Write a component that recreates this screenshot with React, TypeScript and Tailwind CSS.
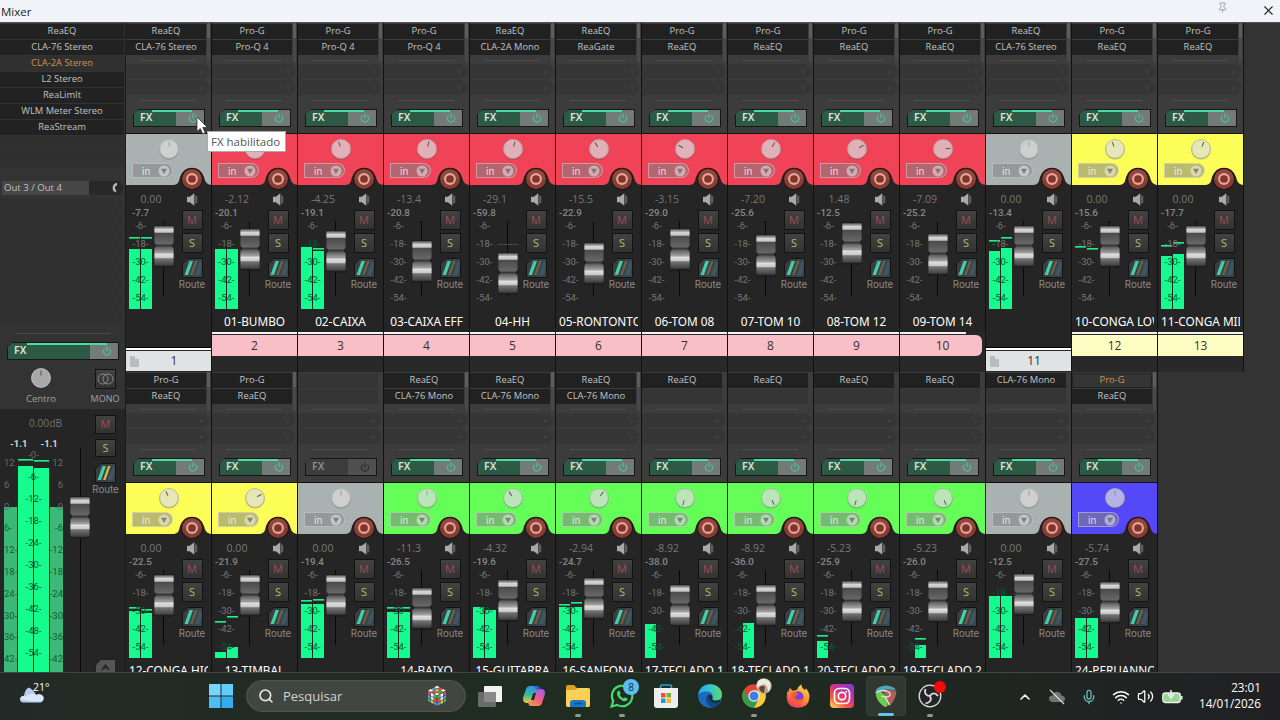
import { ChevronUp, Mic, Pin, Power, Search, Volume2, Wifi, X } from "lucide-react";
import type { ReactNode } from "react";

type Track = {
  fx: string[];
  color: string;
  pan: number;
  vol: string;
  peak: string;
  fader: number;
  // bar heights in px, left and right
  bars: [number, number];
  holds?: [number, number];
  name?: string;
  num: string;
  tint?: string;
  folder?: boolean;
  last?: boolean;
  bypassed?: boolean;
  offline?: boolean;
};

const GRAY = "#a9b1b1";
const RED = "#f04358";
const YELLOW = "#fdfd58";
const GREEN = "#65fd58";
const BLUE = "#5548f8";
const PINK = "#f9bfc6";
const CREAM = "#fdfdc4";
const FOLDER = "#e0e3e3";

const topRow: Track[] = [
  { fx: ["ReaEQ", "CLA-76 Stereo"], color: GRAY, pan: 0, vol: "0.00", peak: "-7.7", fader: 4, bars: [60, 60], holds: [71, 71], num: "1", folder: true },
  { fx: ["Pro-G", "Pro-Q 4"], color: RED, pan: 0, vol: "-2.12", peak: "-20.1", fader: 7, bars: [60, 60], name: "01-BUMBO", num: "2", tint: PINK },
  { fx: ["Pro-G", "Pro-Q 4"], color: RED, pan: -18, vol: "-4.25", peak: "-19.1", fader: 9, bars: [62, 58], holds: [0, 60], name: "02-CAIXA", num: "3", tint: PINK },
  { fx: ["Pro-G", "Pro-Q 4"], color: RED, pan: 15, vol: "-13.4", peak: "-20.8", fader: 19, bars: [0, 0], name: "03-CAIXA EFF", num: "4", tint: PINK },
  { fx: ["ReaEQ", "CLA-2A Mono"], color: RED, pan: 15, vol: "-29.1", peak: "-59.8", fader: 31, bars: [0, 0], name: "04-HH", num: "5", tint: PINK },
  { fx: ["ReaEQ", "ReaGate"], color: RED, pan: -32, vol: "-15.5", peak: "-22.9", fader: 21, bars: [0, 0], name: "05-RONTONTO", num: "6", tint: PINK },
  { fx: ["Pro-G", "ReaEQ"], color: RED, pan: -60, vol: "-3.15", peak: "-29.0", fader: 7, bars: [0, 0], name: "06-TOM 08", num: "7", tint: PINK },
  { fx: ["Pro-G", "ReaEQ"], color: RED, pan: 30, vol: "-7.20", peak: "-25.6", fader: 13, bars: [0, 0], name: "07-TOM 10", num: "8", tint: PINK },
  { fx: ["Pro-G", "ReaEQ"], color: RED, pan: 60, vol: "1.48", peak: "-12.5", fader: 1, bars: [0, 0], name: "08-TOM 12", num: "9", tint: PINK },
  { fx: ["Pro-G", "ReaEQ"], color: RED, pan: 85, vol: "-7.09", peak: "-25.2", fader: 12, bars: [0, 0], name: "09-TOM 14", num: "10", tint: PINK, last: true },
  { fx: ["ReaEQ", "CLA-76 Stereo"], color: GRAY, pan: 0, vol: "0.00", peak: "-13.4", fader: 4, bars: [58, 61], holds: [68, 71], num: "11", folder: true },
  { fx: ["Pro-G", "ReaEQ"], color: YELLOW, pan: -22, vol: "0.00", peak: "-15.6", fader: 4, bars: [0, 0], holds: [62, 60], name: "10-CONGA LOW", num: "12", tint: CREAM },
  { fx: ["Pro-G", "ReaEQ"], color: YELLOW, pan: 22, vol: "0.00", peak: "-17.7", fader: 4, bars: [53, 55], holds: [63, 66], name: "11-CONGA MID", num: "13", tint: CREAM },
];

const bottomRow: Track[] = [
  { fx: ["Pro-G", "ReaEQ"], color: YELLOW, pan: -25, vol: "0.00", peak: "-22.5", fader: 4, bars: [47, 45], holds: [50, 48], name: "12-CONGA HIG", num: "14", tint: CREAM },
  { fx: ["Pro-G", "ReaEQ"], color: YELLOW, pan: 60, vol: "0.00", peak: "-21.9", fader: 4, bars: [6, 11], holds: [36, 41], name: "13-TIMBAL", num: "15", tint: CREAM },
  { fx: [], color: GRAY, pan: 0, vol: "0.00", peak: "-19.4", fader: 4, bars: [54, 54], holds: [57, 58], num: "16", bypassed: true },
  { fx: ["ReaEQ", "CLA-76 Mono"], color: GREEN, pan: 0, vol: "-11.3", peak: "-26.5", fader: 17, bars: [46, 46], holds: [50, 50], name: "14-BAIXO", num: "17" },
  { fx: ["ReaEQ", "CLA-76 Mono"], color: GREEN, pan: -32, vol: "-4.32", peak: "-19.6", fader: 9, bars: [51, 48], name: "15-GUITARRA", num: "18" },
  { fx: ["ReaEQ", "CLA-76 Mono"], color: GREEN, pan: 35, vol: "-2.94", peak: "-24.7", fader: 7, bars: [51, 51], holds: [53, 55], name: "16-SANFONA", num: "19" },
  { fx: ["ReaEQ"], color: GREEN, pan: 198, vol: "-8.92", peak: "-38.0", fader: 14, bars: [34, 0], name: "17-TECLADO 1", num: "20" },
  { fx: ["ReaEQ"], color: GREEN, pan: 155, vol: "-8.92", peak: "-36.0", fader: 14, bars: [0, 35], name: "18-TECLADO 1", num: "21" },
  { fx: ["ReaEQ"], color: GREEN, pan: 198, vol: "-5.23", peak: "-25.9", fader: 10, bars: [17, 0], holds: [22, 0], name: "20-TECLADO 2", num: "22" },
  { fx: ["ReaEQ"], color: GREEN, pan: 155, vol: "-5.23", peak: "-26.0", fader: 10, bars: [0, 13], holds: [0, 19], name: "19-TECLADO 2", num: "23" },
  { fx: ["CLA-76 Mono"], color: GRAY, pan: 0, vol: "0.00", peak: "-12.5", fader: 3, bars: [62, 62], num: "24", folder: true },
  { fx: ["Pro-G", "ReaEQ"], color: BLUE, pan: 0, vol: "-5.74", peak: "-27.5", fader: 11, bars: [40, 40], name: "24-PERUANNO", num: "25", offline: true },
];

function FxButton({ wide, off }: { wide?: boolean; off?: boolean }) {
  return (
    <div
      className={`relative h-[18px] flex border border-[#161616] bg-[#161616] [clip-path:polygon(6px_0,100%_0,100%_100%,0_100%,0_6px)] ${wide ? "w-[112px]" : "w-[72px]"}`}
    >
      <div className={`flex-1 flex items-center pl-[6px] text-[10.5px] font-semibold font-['Noto_Sans',sans-serif] ${off ? "bg-[#3d3d3d] text-[#8b8b8b]" : "bg-[#2c5a45] text-[#d5e5dc]"}`}>FX</div>
      <div className={`w-[28px] flex items-center justify-center pl-1.5 ${off ? "bg-[#505050] text-[#222]" : "bg-[#727b77] text-[#45d2a2]"}`}>
        <Power className="w-[10px] h-[10px]" strokeWidth={2.4} />
      </div>
      {!off && <div className={`absolute top-0 h-[2px] bg-[#49dca5] ${wide ? "left-[19px] w-[80px]" : "left-[18px] w-[40px]"}`} />}
    </div>
  );
}

function Knob({ pan, master }: { pan: number; master?: boolean }) {
  return (
    <svg width="22" height="22" viewBox="0 0 22 22" className="block">
      <circle cx="11" cy="11.8" r="9.8" fill="#000" opacity="0.25" />
      <circle cx="11" cy="11" r="9.8" fill={master ? "#a9a9a9" : "#fff"} opacity={master ? 1 : 0.62} />
      <circle cx="11" cy="11" r="9.4" fill="none" stroke={master ? "#c4c4c4" : "#9aa09a"} strokeWidth="0.9" opacity="0.8" />
      <line x1="11" y1="8.5" x2="11" y2="3.5" stroke="#333" strokeWidth="1" opacity={pan || master ? 0.75 : 0.3} transform={`rotate(${pan} 11 11)`} />
    </svg>
  );
}

function FaderCap() {
  return (
    <svg width="20" height="43" viewBox="0 0 20 43" className="block">
      <defs>
        <linearGradient id="cap" x1="0" y1="0" x2="0" y2="1">
          <stop offset="0" stopColor="#777" />
          <stop offset="0.05" stopColor="#8c8c8c" />
          <stop offset="0.08" stopColor="#d6d6d6" />
          <stop offset="0.15" stopColor="#c6c6c6" />
          <stop offset="0.18" stopColor="#4c4c4c" />
          <stop offset="0.43" stopColor="#666" />
          <stop offset="0.48" stopColor="#333" />
          <stop offset="0.52" stopColor="#606060" />
          <stop offset="0.65" stopColor="#a0a0a0" />
          <stop offset="0.69" stopColor="#e0e0e0" />
          <stop offset="0.77" stopColor="#c8c8c8" />
          <stop offset="0.8" stopColor="#737373" />
          <stop offset="0.94" stopColor="#484848" />
          <stop offset="1" stopColor="#1c1c1c" />
        </linearGradient>
      </defs>
      <path d="M0 1 H20 V17.500 L18 20.500 L20 23.500 V42 H0 V23.500 L2 20.500 L0 17.500 Z" fill="url(#cap)" stroke="#161616" strokeWidth="0.7" />
    </svg>
  );
}

function SquareButton({ children, className }: { children: ReactNode; className: string }) {
  return (
    <div className={`w-[21px] h-[20px] flex items-center justify-center border border-[#131313] bg-linear-to-b from-[#424242] to-[#333] text-[11px] font-["Open_Sans",sans-serif] ${className}`}>
      {children}
    </div>
  );
}

function RouteIcon({ master }: { master?: boolean }) {
  return (
    <svg width="21" height="20" viewBox="0 0 21 20" className="block">
      <path d="M6 0.5 H20.5 V19.5 H0.5 V6 Z" fill="#3a3e40" stroke="#141414" />
      <path d="M14 1 H20 V19 H10 Z" fill="#37464d" />
      <path d="M2.500 17 L7.500 3 H11 L6 17 Z" fill="#42ceaa" />
      <path d="M8 17 L13 3 H15.500 L10.500 17 Z" fill={master ? "#d9b541" : "#6c6145"} />
      <path d="M13 17 L17.500 4 H19.500 V10 L17 17 Z" fill="#425661" />
    </svg>
  );
}

function RecordButton() {
  return (
    <svg width="24" height="24" viewBox="0 0 24 24" className="block">
      <circle cx="12" cy="12" r="11.3" fill="#241917" />
      <circle cx="12" cy="12" r="10" fill="#873d34" />
      <path d="M2.500 12 A9.500 9.500 0 0 1 21.500 12 Z" fill="#9b4c42" opacity="0.6" />
      <circle cx="12" cy="12" r="4.900" fill="#83332c" stroke="#e0a899" strokeWidth="2.100" />
    </svg>
  );
}

function Speaker() {
  return (
    <svg width="13" height="13" viewBox="0 0 13 13" className="block">
      <path d="M1 3.800 H3.800 L8.300 0.300 V12.700 L3.800 9.200 H1 Z" fill="#a9a9a9" />
      <path d="M8.900 2 L11.300 3.300 V9.700 L8.900 11 Z" fill="#5d5d5d" />
    </svg>
  );
}

function Header({ track }: { track: Track }) {
  return (
    <div className="relative h-[51px] w-[85px]">
      <svg width="85" height="51" className="absolute inset-0">
        <rect width="85" height="51" fill={track.color} />
        <path d="M48 51 C53 50 53 47 54 43 A12.500 12.500 0 0 1 78 43 C79 47 80 50 85 51 Z" fill="#252525" />
      </svg>
      <div className="relative pt-[4px] pl-[32px]">
        <Knob pan={track.pan} />
      </div>
      <div className="relative flex mt-[3px] pl-[6px]">
        <div className="w-[41px] h-[15px] flex items-center justify-between pl-[9px] pr-[2px] rounded-r-full border border-white/35 bg-[#848484]/55 text-[10px] leading-none text-white/75 font-['Inter',sans-serif]">
          in
          <svg width="12" height="12" viewBox="0 0 12 12">
            <circle cx="6" cy="6" r="5.500" fill="#fff" opacity="0.45" />
            <path d="M3 3.800 H9 L6 8.900 Z" fill="#666" opacity="0.75" />
          </svg>
        </div>
        <div className="ml-[7px] mt-[4px] -mb-[10px]">
          <RecordButton />
        </div>
      </div>
    </div>
  );
}

function Bar({ height, hold }: { height: number; hold: number }) {
  return (
    <div className="relative flex-1 flex items-end">
      <div className="w-full bg-[#15fb8e]" style={{ height }} />
      {hold > 0 && <div className="absolute inset-x-0 h-[2px] border-b border-[#12ad65] bg-[#20ee8a]" style={{ bottom: hold - 1 }} />}
    </div>
  );
}

function Meter({ track }: { track: Track }) {
  const holds = track.holds ?? [0, 0];
  return (
    <div className="relative w-[23px] h-[88px] flex gap-px">
      <Bar height={track.bars[0]} hold={holds[0]} />
      <Bar height={track.bars[1]} hold={holds[1]} />
      <div className="absolute -left-1 -right-1 top-[-4px] flex flex-col text-center text-[9.5px] leading-[18px] font-['Roboto',sans-serif]">
        {[6, 18, 30, 42, 54].map((db, i) => {
          const lit = Math.max(...track.bars) > 79 - i * 18;
          return (
            <span key={db} className={lit ? "text-[#075c32]" : "text-[#777]"}>
              -{db}-
            </span>
          );
        })}
      </div>
    </div>
  );
}

function Slots({ track }: { track: Track }) {
  return (
    <div className="h-[37px] flex">
      <div className="w-[80px] mr-px flex flex-col pt-px gap-px">
        {[0, 1].map((i) => {
          const label = track.fx[i];
          const dim = track.offline && i === 0;
          return (
            <div
              key={i}
              className={`h-[15px] text-center text-[9.4px] ${label ? (dim ? "bg-[#353535] border border-[#242424] leading-[12px] text-[#cf9254]" : "bg-[#212121] leading-[14px] text-[#c3c3c3]") : "bg-[#353535]"}`}
            >
              {label}
            </div>
          );
        })}
      </div>
      {track.fx.length > 1 && (
        <div className="w-[3px] h-[39px] bg-[#484848]">
          <div className="h-[15px] bg-[#5c5c5c]" />
        </div>
      )}
    </div>
  );
}

function Strip({ track }: { track: Track }) {
  return (
    <div className="w-[86px] h-[349px] shrink-0 border-r border-[#111] bg-[#292929] flex flex-col">
      <div className="h-[111px] bg-[#3c3c3c] border-b border-[#111]">
        <Slots track={track} />
        <div className="ml-[14px] w-[56px] h-px bg-[#4b4b4b]" />
        {[0, 1].map((i) => (
          <div key={i} className={`w-[83px] h-[15px] rounded-r-full bg-[#363636] flex justify-end items-center pr-[6px] ${i ? "mt-px" : "mt-[3px]"}`}>
            <span className="w-[3px] h-[2px] bg-[#414141]" />
          </div>
        ))}
        <div className="ml-[14px] mt-[5px] w-[56px] h-px bg-[#4e4e4e]" />
        <div className="mt-[8px] ml-[7px]">
          <FxButton off={track.bypassed} />
        </div>
      </div>
      <Header track={track} />
      <div className="h-[127px] shrink-0 flex bg-[#252525]">
        <div className="w-[54px] pt-[8px]">
          <div className="h-[13px] w-[50px] text-center text-[10.500px] leading-[12px] text-[#777]">{track.vol}</div>
          <div className="h-[13px] w-[29px] text-center text-[9.800px] leading-[13px] font-medium text-[#888] font-['Roboto',sans-serif]">{track.peak}</div>
          <div className="flex pt-[2px]">
            <div className="ml-[3px]">
              <Meter track={track} />
            </div>
            <div className="relative ml-[2px] w-[20px] h-[75px] bg-[linear-gradient(#070707,#070707)] bg-size-[1px_75px] bg-position-[9px_0] bg-no-repeat">
              <div className="absolute left-0 top-[23px] w-full h-px bg-[#484848]" />
              <div className="relative" style={{ paddingTop: track.fader }}>
                <FaderCap />
              </div>
            </div>
          </div>
        </div>
        <div className="w-[24px] flex flex-col items-center pt-[8px]">
          <Speaker />
          <SquareButton className="mt-[4px] text-[#a14b50]">M</SquareButton>
          <SquareButton className="mt-[3px] text-[#b3ba63]">S</SquareButton>
          <div className="mt-[5px]">
            <RouteIcon />
          </div>
          <div className="mt-px text-[9.700px] leading-[12px] text-[#8a8a8a] font-['Inter',sans-serif]">Route</div>
        </div>
      </div>
      <div className={`bg-[#252525] shrink-0 ${track.folder ? "h-[35px]" : "h-[20px]"}`}>
        <div className="ml-[3px] w-[79px] overflow-hidden whitespace-nowrap text-center text-[11.800px] leading-[18px] text-white font-['Noto_Sans',sans-serif]">{track.name}</div>
      </div>
      {track.folder ? (
        <div className="shrink-0 border-t border-black">
          <div className="h-[2px] bg-white" />
          <div className="mt-px h-[20px] flex items-center text-[12px] text-[#333]" style={{ backgroundColor: FOLDER }}>
            <svg width="10" height="11" viewBox="0 0 10 11" className="ml-[4px]">
              <path d="M0 0 H5 V3 H9 V11 H0 Z" fill="#b7bcbc" />
            </svg>
            <span className="w-[68px] text-center">{track.num}</span>
          </div>
        </div>
      ) : (
        <div className="shrink-0">
          <div className={`h-[2px] bg-[#f4f4f4] ${track.last ? "w-[66px]" : ""}`} />
          <div
            className={`mt-px h-[21px] text-center text-[12px] leading-[21px] text-[#333] ${track.last ? "w-[82px] rounded-r-[6px] pl-[3px]" : ""}`}
            style={{ backgroundColor: track.tint ?? "#c9fdc4" }}
          >
            {track.num}
          </div>
        </div>
      )}
    </div>
  );
}

function SideMeter({ right }: { right?: boolean }) {
  const marks = ["12", "6", "0", "6", "12", "18", "24", "30", "36", "42"];
  return (
    <div className="relative w-[13px] flex flex-col justify-end">
      <div className="h-[165px] bg-[#3cb978]" />
      <div className={`absolute top-[1px] flex flex-col text-[9.500px] leading-[21.800px] font-['Roboto',sans-serif] ${right ? "right-0 text-right" : "left-0 text-left"}`}>
        {marks.map((m, i) => (
          <span key={i} className={i > 2 ? "text-[#155c36]" : "text-[#6b6b6b]"}>
            {i < 2 ? m : right ? `-${m}` : `${m}-`}
          </span>
        ))}
      </div>
    </div>
  );
}

function Master() {
  const fx = ["ReaEQ", "CLA-76 Stereo", "CLA-2A Stereo", "L2 Stereo", "ReaLimIt", "WLM Meter Stereo", "ReaStream"];
  return (
    <div className="w-[126px] h-full shrink-0 border-r border-[#1a1a1a] bg-[#333] flex flex-col">
      <div className="h-[158px] pt-px pr-px flex flex-col gap-px">
        {fx.map((name) => (
          <div
            key={name}
            className={`h-[15px] text-center text-[9.400px] leading-[14px] ${name === "CLA-2A Stereo" ? "bg-[#303030] text-[#cf9254]" : "bg-[#222] text-[#c3c3c3]"}`}
          >
            {name}
          </div>
        ))}
        <div className="h-[15px] bg-[#2f2f2f]" />
        <div className="h-[15px] bg-[#2f2f2f]" />
      </div>
      <div className="h-[14px] ml-[2px] mr-[2px] flex bg-[#282828] rounded-r-full">
        <div className="w-[87px] bg-[#464646] pl-[2px] text-[9.600px] leading-[13px] text-[#c0c0c0]">Out 3 / Out 4</div>
        <svg width="34" height="14" viewBox="0 0 34 14">
          <path d="M28 3 A4 4 0 0 0 27 10.500" fill="none" stroke="#b5b5b5" strokeWidth="2.300" />
        </svg>
      </div>
      <div className="h-[138px] pt-[3px] pr-[3px] flex flex-col gap-px">
        {[0, 1, 2, 3, 4, 5, 6, 7].map((i) => (
          <div key={i} className="h-[15px] rounded-r-full bg-[#303030] flex items-center justify-end pr-[6px]">
            <span className="w-[2px] h-[2px] bg-[#3e3e3e]" />
          </div>
        ))}
      </div>
      <div className="ml-[16px] w-[95px] h-px bg-[#4a4a4a]" />
      <div className="pt-[8px] pl-[7px]">
        <FxButton wide />
      </div>
      <div className="h-[49px] flex pt-[7px] text-[9.500px] text-[#a2a2a2]">
        <div className="w-[82px] shrink-0 flex flex-col items-center">
          <Knob pan={0} master />
          <span className="mt-[4px] leading-[12px]">Centro</span>
        </div>
        <div className="w-[46px] shrink-0 flex flex-col items-center pt-[2px]">
          <SquareButton className="">
            <svg width="17" height="12" viewBox="0 0 17 12" fill="none" stroke="#888">
              <circle cx="6" cy="6" r="5" />
              <circle cx="11" cy="6" r="5" />
            </svg>
          </SquareButton>
          <span className="mt-[4px] text-[9px] leading-[12px]">MONO</span>
        </div>
      </div>
      <div className="flex-1 flex bg-[#252525] overflow-hidden">
        <div className="w-[67px] flex flex-col">
          <div className="pt-[7px] pl-[29px] h-[28px] whitespace-nowrap text-[10.200px] leading-[14px] text-[#727272]">0.00dB</div>
          <div className="flex gap-[13px] pl-[10px] text-[9.500px] leading-[14px] font-bold text-[#d4d4d4] font-['Roboto',sans-serif]">
            <span>-1.1</span>
            <span>-1.1</span>
          </div>
          <div className="pl-[4px] flex gap-px h-[221px]">
            <SideMeter />
            <div className="relative w-[31px] flex gap-px">
              <Bar height={206} hold={212} />
              <Bar height={204} hold={211} />
              <div className="absolute inset-x-0 top-[-7px] flex flex-col text-center text-[9.500px] leading-[21.950px] font-['Roboto',sans-serif]">
                {[0, 6, 12, 18, 24, 30, 36, 42, 48, 54].map((db) => (
                  <span key={db} className={db ? "text-[#075c32]" : "text-[#6b6b6b]"}>
                    -{db}-
                  </span>
                ))}
              </div>
            </div>
            <SideMeter right />
          </div>
        </div>
        <div className="ml-[3px] mt-[39px] w-[20px] h-[224px] bg-[linear-gradient(#070707,#070707)] bg-size-[1px_224px] bg-position-[10px_0] bg-no-repeat pt-[48px]">
          <FaderCap />
        </div>
        <div className="w-[31px] shrink-0 flex flex-col items-center pt-[6px]">
          <SquareButton className="text-[#a14b50]">M</SquareButton>
          <SquareButton className="mt-[5px] text-[#b3ba63]">S</SquareButton>
          <div className="mt-[6px]">
            <RouteIcon master />
          </div>
          <span className="mt-px text-[9.700px] leading-[12px] text-[#8a8a8a] font-['Inter',sans-serif]">Route</span>
          <svg width="21" height="20" viewBox="0 0 21 20" className="mt-[163px] shrink-0">
            <path d="M6 0.500 H20.500 V19.500 H0.500 V6 Z" fill="#555" stroke="#222" />
            <path d="M7 11 L10.500 6 L14 11 M8 9 H13" fill="none" stroke="#252525" strokeWidth="1.500" />
          </svg>
        </div>
      </div>
    </div>
  );
}

function Cube() {
  const c = ["#e7514b", "#f4f4f4", "#41b65c", "#f6b63e", "#4b9be9", "#e7e7e7"];
  const cells = [0, 1, 2, 3, 4, 5, 6, 7, 8];
  return (
    <svg width="20" height="22" viewBox="0 0 20 22">
      <path d="M10 0.500 L19.500 5.500 V16 L10 21.500 L0.500 16 V5.500 Z" fill="#333" />
      {cells.map((i) => {
        const u = i % 3;
        const v = Math.floor(i / 3);
        return (
          <g key={i}>
            <path transform={`translate(${10 + (u - v) * 3.1} ${0.8 + (u + v) * 1.65})`} d="M0 0 L2.800 1.500 L0 3 L-2.800 1.500 Z" fill={c[(i * 5 + 1) % 6]} />
            <path transform={`translate(${0.8 + u * 3.1} ${6 + u * 1.65 + v * 3.5})`} d="M0 0 L2.700 1.400 V4.400 L0 3 Z" fill={c[(i * 7 + v) % 6]} />
            <path transform={`translate(${10.3 + u * 3.1} ${11 - u * 1.65 + v * 3.5})`} d="M0 0 L2.700 -1.400 V1.600 L0 3 Z" fill={c[(i * 5 + v + 2) % 6]} />
          </g>
        );
      })}
    </svg>
  );
}

function TaskIcon({ children, dot, active }: { children: ReactNode; dot?: boolean; active?: boolean }) {
  return (
    <div className="w-[44px] h-full flex justify-center">
      <div className={`relative w-[40px] h-[40px] mt-[3px] rounded-[4px] flex items-center justify-center ${active ? "bg-[#2f392f] border border-[#374137]" : ""}`}>
        {children}
        {dot && <div className="absolute bottom-[-1px] w-[6px] h-[3px] rounded-full bg-[#909790]" />}
        {active && <div className="absolute bottom-[-1px] w-[16px] h-[3px] rounded-full bg-[#62c4f0]" />}
      </div>
    </div>
  );
}

function TaskIcons() {
  return (
    <div className="flex h-full">
      <TaskIcon>
        <svg width="24" height="24" viewBox="0 0 24 24">
          <rect x="6" y="2" width="18" height="16" rx="1" fill="#f2f2f2" />
          <rect x="0" y="8" width="18" height="15" rx="1" fill="#777" opacity="0.85" />
        </svg>
      </TaskIcon>
      <TaskIcon>
        <svg width="24" height="24" viewBox="0 0 24 24">
          <defs>
            <linearGradient id="cpA" x1="0.500" y1="0" x2="0.400" y2="1">
              <stop offset="0" stopColor="#2b95ea" />
              <stop offset="0.500" stopColor="#35b6a0" />
              <stop offset="1" stopColor="#e6c93c" />
            </linearGradient>
            <linearGradient id="cpB" x1="0.700" y1="0" x2="0.300" y2="1">
              <stop offset="0" stopColor="#a75bea" />
              <stop offset="0.500" stopColor="#ee5a8e" />
              <stop offset="1" stopColor="#f88e4c" />
            </linearGradient>
          </defs>
          <path d="M8 2 H15 Q17 2 17.500 4 L18 6 H16 Q14 6 13.300 8 L10.500 17 Q10 19 8 19 H4 Q0 18 1.300 13 L4 5 Q5 2 8 2 Z" fill="url(#cpA)" />
          <path d="M16 22 H9 Q7 22 6.500 20 L6 18 H8 Q10 18 10.700 16 L13.500 7 Q14 5 16 5 H20 Q24 6 22.700 11 L20 19 Q19 22 16 22 Z" fill="url(#cpB)" />
          <path d="M13.800 5.500 H17.800 L16.500 2.500 Q16 2 14 2 H12 Q14 3 13.800 5.500 Z" fill="#255fd2" />
          <path d="M11.300 9 L14 9 L12 16 H9 Z" fill="#1d2b20" />
        </svg>
      </TaskIcon>
      <TaskIcon dot>
        <svg width="24" height="24" viewBox="0 0 24 24">
          <path d="M0 3 Q0 1 2 1 H8 L11 4 H22 Q24 4 24 6 V21 Q24 23 22 23 H2 Q0 23 0 21 Z" fill="#dd9e25" />
          <path d="M0 6 H9 L12 4 H22 Q24 4 24 6 V21 Q24 23 22 23 H2 Q0 23 0 21 Z" fill="#fad157" />
          <path d="M4 23 V19 Q4 16 7 16 H17 Q20 16 20 19 V23 Z" fill="#1979c9" />
          <path d="M8 19.500 H16" stroke="#0a4d8a" strokeWidth="1.500" />
        </svg>
      </TaskIcon>
      <TaskIcon dot>
        <svg width="24" height="24" viewBox="0 0 24 24" fill="none">
          <path d="M1.500 22.500 L3.200 16.900 A10.200 10.200 0 1 1 7.200 20.900 Z" stroke="#45da6c" strokeWidth="2.200" />
          <path d="M7.500 7.500 Q9 5.500 9.800 7.500 L10.700 9.600 L9.700 11 Q11 13.600 13.700 14.600 L15 13.200 L17.500 14.400 Q18 16.500 15 17.200 Q12.500 17.300 9.500 14.400 Q6 10.900 7.500 7.500 Z" fill="#45da6c" />
        </svg>
        <div className="absolute top-[3px] right-[3px] w-[16px] h-[16px] rounded-full bg-[#5bbdf0] text-center text-[10px] leading-[16px] text-[#16303e]">8</div>
      </TaskIcon>
      <TaskIcon>
        <svg width="24" height="24" viewBox="0 0 24 24">
          <path d="M6.500 5 V2.500 Q6.500 1 8 1 H16 Q17.500 1 17.500 2.500 V5" fill="none" stroke="#299fda" strokeWidth="1.700" />
          <path d="M0 4 H24 V21 Q24 24 21 24 H3 Q0 24 0 21 Z" fill="#eee" />
          <path d="M7 9 H11.500 V13.500 H7 Z" fill="#e9532b" />
          <path d="M12.500 9 H17 V13.500 H12.500 Z" fill="#76b62e" />
          <path d="M7 14.500 H11.500 V19 H7 Z" fill="#2197da" />
          <path d="M12.500 14.500 H17 V19 H12.500 Z" fill="#f3b52b" />
        </svg>
      </TaskIcon>
      <TaskIcon>
        <svg width="24" height="24" viewBox="0 0 24 24">
          <defs>
            <linearGradient id="edge" x1="0" y1="0.300" x2="1" y2="0.300">
              <stop offset="0" stopColor="#2ba6e3" />
              <stop offset="0.500" stopColor="#34c3cf" />
              <stop offset="1" stopColor="#5edb62" />
            </linearGradient>
          </defs>
          <circle cx="12" cy="12" r="11.800" fill="#1a6dbe" />
          <path d="M0.200 11 C1 4 6 0.200 12 0.200 C19 0.200 24 5 24 10.500 C24 14.500 21 16.500 18 16.500 C15 16.500 13.500 15.500 14.500 14 C16 11 13 7.500 9 7.500 C4.500 7.500 1 9 0.200 11 Z" fill="url(#edge)" />
          <path d="M9.500 11 C6 15 9 22 14 23.500 C18.500 23 21.500 20 22.500 18 C17 20.500 11 18 9.500 11 Z" fill="#12488e" />
          <path d="M10 11.500 C11.500 9.500 14.700 11 14.500 14 C13.500 15.500 15 16.500 17.500 16.700 L21.500 16 Q22.500 16 22.200 17.500 C17 21.500 10.500 17.500 10 11.500 Z" fill="#1f2c21" />
        </svg>
      </TaskIcon>
      <TaskIcon dot>
        <svg width="24" height="24" viewBox="0 0 24 24">
          <circle cx="12" cy="12" r="11.800" fill="#df4437" />
          <path d="M12 6.600 H22.500 A11.800 11.800 0 0 1 12 23.800 L16.500 15 Z" fill="#f8cc38" />
          <path d="M12 23.800 A11.800 11.800 0 0 1 1.800 6.100 L7 15 Q10 19 16.500 15 Z" fill="#319e4f" />
          <circle cx="12" cy="12" r="5.700" fill="#f3f3f3" />
          <circle cx="12" cy="12" r="4.500" fill="#3b7ee8" />
        </svg>
        <svg width="16" height="16" viewBox="0 0 16 16" className="absolute top-[2px] right-[2px]">
          <circle cx="8" cy="8" r="7.700" fill="#b7a997" />
          <path d="M2 3 Q8 -2 14 4 Q16 9 12 14 Q12 7 8 6 Q4 7 1 10 Q0 6 2 3 Z" fill="#eee9de" />
          <path d="M3 10 Q6 6 9 9 L8 15 Q4 14 3 10 Z" fill="#6f3f31" />
        </svg>
      </TaskIcon>
      <TaskIcon>
        <svg width="24" height="24" viewBox="0 0 24 24">
          <defs>
            <linearGradient id="fox" x1="0.800" y1="0" x2="0.200" y2="1">
              <stop offset="0" stopColor="#ffe145" />
              <stop offset="0.450" stopColor="#ff9333" />
              <stop offset="1" stopColor="#ef2c66" />
            </linearGradient>
          </defs>
          <path d="M4 4 L7 7 Q10 5.500 11 6 Q12 2 15.500 0.500 Q15.500 4 19 6 Q20 5.500 19.500 4 Q23.500 8 23.500 13 Q23 23.500 12 23.800 Q1 23.500 0.700 13 Q0.500 9 2 6.500 L2.500 8 Q3 5 4 4 Z" fill="url(#fox)" />
          <circle cx="12" cy="12.800" r="5.500" fill="#7545d7" />
          <path d="M5 9 Q9 7.500 11.500 9.500 Q13 10.500 10.500 11.500 Q8 12.500 10 15 Q13 17 16.500 14 Q17 19 11 19.500 Q5 18 5 9 Z" fill="#f95b35" />
        </svg>
      </TaskIcon>
      <TaskIcon>
        <svg width="24" height="24" viewBox="0 0 24 24" fill="none">
          <defs>
            <linearGradient id="insta" x1="0.900" y1="0" x2="0.200" y2="1">
              <stop offset="0" stopColor="#8039d5" />
              <stop offset="0.450" stopColor="#d63287" />
              <stop offset="0.750" stopColor="#f25b42" />
              <stop offset="1" stopColor="#fbc557" />
            </linearGradient>
          </defs>
          <rect width="24" height="24" rx="4" fill="url(#insta)" />
          <rect x="4.500" y="4.500" width="15" height="15" rx="4.500" stroke="#fff" strokeWidth="1.700" />
          <circle cx="12" cy="12" r="3.700" stroke="#fff" strokeWidth="1.700" />
          <circle cx="16.300" cy="7.700" r="1" fill="#fff" />
        </svg>
      </TaskIcon>
      <TaskIcon active>
        <svg width="24" height="24" viewBox="0 0 24 24">
          <path d="M1.500 8 Q1.500 5 5 3.300 Q12 -0.500 19 3.300 Q21.500 4.500 22 6.500 Q12 4 1.500 8 Z" fill="#4fa5ba" />
          <path d="M1.500 8.500 Q3 7 7 7.500 L14 14 L13.500 22 Q11.500 24 8.500 21.500 Q2 16 1.500 8.500 Z" fill="#6ecc51" />
          <path d="M9 7 Q16 5 22.300 7.200 Q22.500 13 18 19 Q16.500 21.300 14.500 22 L12.500 14 Z" fill="#b0605a" />
          <path d="M2 8.500 Q8 5.500 13 7 Q17.500 9 15.500 12 Q13 14 7.500 12 M11.500 13.500 L15.500 21" fill="none" stroke="#e8e8e8" strokeWidth="1.300" />
        </svg>
      </TaskIcon>
      <TaskIcon dot>
        <svg width="24" height="24" viewBox="0 0 24 24" fill="none">
          <circle cx="12" cy="12" r="10.800" fill="#222427" stroke="#dcdcdc" strokeWidth="1.300" />
          <path d="M12 12 C8 12 6 9 7.500 5 M12 12 C14 8.500 17.500 8.500 20 12 M12 12 C14 15.500 12 19 7.500 19.500" stroke="#dcdcdc" strokeWidth="1.900" />
        </svg>
        <div className="absolute top-[5px] right-[4px] w-[12px] h-[12px] rounded-full bg-[#f60b0b]" />
      </TaskIcon>
    </div>
  );
}

function Taskbar() {
  return (
    <div className="h-[48px] shrink-0 flex border-t border-[#414641] bg-linear-to-r from-[#222a27] via-[#1f2d20] to-[#202023] text-white">
      <div className="w-[209px] flex pl-[19px] pt-[8px]">
        <svg width="26" height="22" viewBox="0 0 26 22">
          <path d="M4 21.500 Q0.500 21 1 17.500 Q2 15 5 14.800 Q6 8 10 6.500 Q15 9 17 14 Q21 12 24 15 Q26 19 22 21.500 Z" fill="#b8cbea" />
          <path d="M1 17.500 Q3 14 6.500 15.500 Q12 11 17 14 Q21 12 24 15 Q25.500 18 23 20 Q12 22 1 17.500 Z" fill="#dbe6f8" />
        </svg>
        <span className="-ml-[12px] text-[10.500px] leading-[12px]">21°</span>
      </div>
      <div className="w-[37px] pt-[11px]">
        <svg width="24" height="24" viewBox="0 0 24 24">
          <path d="M0 0 H11.500 V11.500 H0 Z" fill="#75d7fa" />
          <path d="M12.500 0 H24 V11.500 H12.500 Z" fill="#61cdf8" />
          <path d="M0 12.500 H11.500 V24 H0 Z" fill="#4dbdf5" />
          <path d="M12.500 12.500 H24 V24 H12.500 Z" fill="#36acef" />
        </svg>
      </div>
      <div className="mt-[7px] w-[220px] h-[32px] rounded-full border border-[#505450] bg-[#424640] flex items-center pl-[11px] pr-[18px]">
        <Search className="w-[16px] h-[16px] text-[#e6e6e6]" strokeWidth={2.4} />
        <span className="ml-[9px] pt-px flex-1 text-[13px] text-[#d4d4d4]">Pesquisar</span>
        <Cube />
      </div>
      <div className="w-[2px]" />
      <TaskIcons />
      <div className="flex-1 flex justify-end items-center pr-[19px]">
        <ChevronUp className="w-[16px] h-[16px]" strokeWidth={2.3} />
        <svg width="18" height="16" viewBox="0 0 18 16" className="ml-[15px]">
          <path d="M4 13 Q0.500 12 1 8.500 Q2 6 5 6.500 Q6 2 10 3 Q13 3.500 13.500 6.500 Q17 7 17 10 Q17 12.500 14 13 Z" fill="#747474" />
          <path d="M2 1 L16 15" stroke="#d5d5d5" strokeWidth="1.300" />
        </svg>
        <Mic className="ml-[15px] w-[16px] h-[16px] text-[#6ab5bc]" />
        <Wifi className="ml-[15px] w-[18px] h-[18px]" />
        <Volume2 className="ml-[7px] w-[17px] h-[17px]" strokeWidth={1.800} />
        <svg width="21" height="16" viewBox="0 0 21 16" className="ml-[8px]">
          <rect x="0.800" y="4" width="17.500" height="9.500" rx="2.500" fill="#9ad398" stroke="#e8f2e8" strokeWidth="1.300" />
          <path d="M19.800 7 V10.500" stroke="#e8f2e8" strokeWidth="1.500" />
          <path d="M9 1 V7 M6 5 L9 9 L12 5" fill="none" stroke="#e8f2e8" strokeWidth="1.500" />
        </svg>
        <div className="ml-[13px] pb-[3px] w-[65px] text-right whitespace-nowrap text-[11.700px] leading-[16px]">
          <div>23:01</div>
          <div>14/01/2026</div>
        </div>
      </div>
    </div>
  );
}

export default function App() {
  return (
    <div className="relative w-[1280px] h-[720px] overflow-hidden flex flex-col bg-[#333] font-['Open_Sans','Noto_Sans',sans-serif]">
      <div className="h-[23px] shrink-0 flex justify-between bg-[#f0f4f9] border-b border-[#555] text-[#222]">
        <span className="pl-px text-[11.500px] leading-[23px]">Mixer</span>
        <div className="flex pr-[4px]">
          <Pin className="mt-[2px] mr-[33px] w-[11px] h-[11px] text-[#9a9a9a]" />
          <X className="mt-[3px] w-[15px] h-[15px]" strokeWidth={1.800} />
        </div>
      </div>
      <div className="h-[649px] shrink-0 flex overflow-hidden">
        <Master />
        <div className="flex flex-col">
          <div className="flex">
            {topRow.map((track) => (
              <Strip key={track.num} track={track} />
            ))}
          </div>
          <div className="flex">
            {bottomRow.map((track) => (
              <Strip key={track.num} track={track} />
            ))}
          </div>
        </div>
      </div>
      <Taskbar />
      <div className="absolute left-[207px] top-[131px] w-[79px] h-[21px] bg-white border border-[#aaa] pl-[3px] text-[11.500px] leading-[19px] whitespace-nowrap text-[#555] z-20">FX habilitado</div>
      <svg width="13" height="19" viewBox="0 0 13 19" className="absolute left-[196px] top-[116px] z-20">
        <path d="M1 1 V15.500 L4.300 12.500 L6.700 18 L9.200 17 L6.800 11.500 H11.500 Z" fill="#fff" stroke="#222" strokeWidth="0.700" />
      </svg>
    </div>
  );
}
